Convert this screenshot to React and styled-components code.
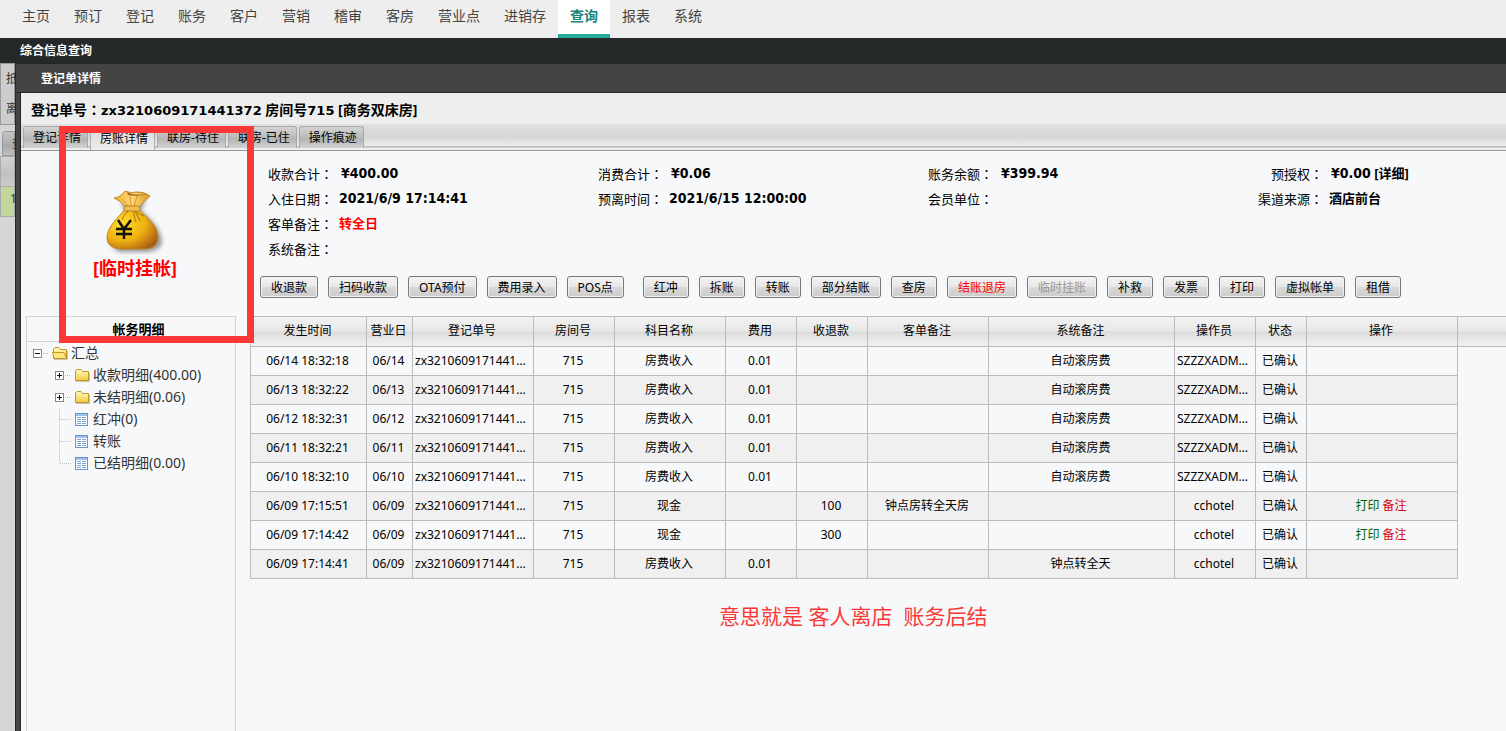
import React from 'react'
import styled, { createGlobalStyle, css } from 'styled-components'

const GlobalStyle = createGlobalStyle`
  * {
    box-sizing: border-box;
  }

  body {
    margin: 0;
    background: #d5d6d7;
    color: #000;
    font-family: 'Noto Sans', 'Noto Sans CJK SC', sans-serif;
    font-size: 12px;
  }
`

const Page = styled.div`
  display: flex;
  flex-direction: column;
  min-height: 100vh;
  overflow: hidden;
`

const Nav = styled.nav`
  display: flex;
  height: 38px;
  padding-left: 10px;
  background: #eee;
`

const NavLink = styled.a`
  padding: 0 12px;
  color: #444;
  font-size: 14px;
  line-height: 32px;
  text-decoration: none;

  ${props => props.$active && css`
    background: #fff;
    border-bottom: 4px solid #23ab9b;
    color: #16857c;
    font-weight: bold;
  `}
`

const PageTitle = styled.header`
  height: 25px;
  padding-left: 20px;
  background: #25292a;
  color: #fff;
  font-size: 12px;
  font-weight: bold;
  line-height: 26px;
`

const Workspace = styled.div`
  display: flex;
  flex-grow: 1;
`

/* The sliver of the search page that stays visible left of the dialog. */
const Behind = styled.div`
  width: 15px;
  flex-shrink: 0;
  overflow: hidden;
  color: #333;
  white-space: nowrap;
`

const BehindFilter = styled.div`
  height: 62px;
  padding-left: 5px;
  border: 1px solid #999;
  background: #ccc;
  line-height: 30px;
`

const BehindTab = styled.div`
  height: 25px;
  margin: 6px 0 0 2px;
  padding-left: 9px;
  border: 1px solid #999;
  border-radius: 3px 0 0 0;
  background: linear-gradient(#c4c4c4, #aaa 60%, #c0c0c0);
  line-height: 24px;
`

const BehindHead = styled.div`
  height: 31px;
  border: 1px solid #aaa;
  background: linear-gradient(#d3d3d3, #c0c0c0 60%, #ccc);
`

const BehindRow = styled.div`
  height: 30px;
  padding-left: 9px;
  border: 1px solid #aaa;
  border-top: 0;
  background: #c3d69b;
  line-height: 24px;
`

const Dialog = styled.section`
  display: flex;
  flex-direction: column;
  flex-grow: 1;
  min-width: 0;
  border-left: 1px solid #222627;
  background: #444;
`

const DialogTitle = styled.header`
  height: 30px;
  padding-left: 25px;
  border-top: 1px solid #222627;
  border-bottom: 1px solid #222627;
  color: #fff;
  font-weight: bold;
  line-height: 30px;
`

const DialogBody = styled.div`
  position: relative;
  flex-grow: 1;
  margin-left: 4px;
  border-left: 1px solid #222627;
  background: #f6f8fa;
`

const OrderHeading = styled.h1`
  height: 31px;
  margin: 0;
  padding-left: 10px;
  background: #eee;
  font-size: 14px;
  line-height: 32px;
  white-space: pre;
`

const OrderNumber = styled.span`
  font-family: 'DejaVu Sans', sans-serif;
  font-size: 13px;
`

/* The TC face sets the full-width colon in the middle of its box. */
const Colon = styled.span`
  font-family: 'Noto Sans CJK TC', sans-serif;
`

const TabBar = styled.div`
  display: flex;
  gap: 2px;
  height: 27px;
  padding: 2px 0 0 2px;
  border-bottom: 1px solid #999;
  background: linear-gradient(#e0e0e0, #d6d6d6 50%, #eee 85%, #bbb 86%, #bbb 90%, #eee 91%);
`

const Tab = styled.button`
  height: ${props => (props.$active ? 24 : 22)}px;
  padding: 0 6px 0 9px;
  border: 1px solid #aaa;
  border-bottom: 0;
  border-radius: 3px 3px 0 0;
  background: ${props => (props.$active ? 'linear-gradient(#d8d8d8, #eee)' : 'linear-gradient(#d4d4d4, #b5b5b5 60%, #d4d4d4)')};
  color: #000;
  font: inherit;
  line-height: 22px;
  white-space: nowrap;
`

const Columns = styled.div`
  display: flex;
`

const Side = styled.aside`
  width: 229px;
  flex-shrink: 0;
  padding-left: 5px;
`

const Status = styled.div`
  display: flex;
  flex-direction: column;
  align-items: center;
  height: 165px;
  padding: 38px 6px 0 0;
`

const StatusText = styled.strong`
  color: #f00;
  font-size: 18px;
  line-height: 26px;
`

const TreePanel = styled.div`
  width: 210px;
  height: calc(100vh - 316px);
  border: 1px solid #d3d3d3;
  border-bottom: 0;
`

const TreeTitle = styled.h2`
  height: 25px;
  margin: 0;
  padding-left: 15px;
  border-bottom: 1px solid #d3d3d3;
  background: #f8f8f8;
  font-size: 13px;
  line-height: 24px;
  text-align: center;
`

const TreeRow = styled.div`
  display: flex;
  align-items: center;
  height: 22px;
  padding-left: ${props => (props.$root ? 5 : 27)}px;
  color: #333;
  font-size: 14px;
  line-height: 22px;
  white-space: nowrap;

  svg {
    flex-shrink: 0;
    margin-right: 3px;
  }

  svg:first-child {
    margin-right: 0;
  }
`

const Main = styled.main`
  flex-grow: 1;
  min-width: 0;
`

const Summary = styled.dl`
  display: grid;
  grid-template-columns: 330px 330px 330px 1fr;
  grid-auto-rows: 25px;
  height: 125px;
  margin: 0;
  padding: 10px 0 0 12px;
`

const SummaryItem = styled.div`
  display: flex;
  grid-column: ${props => props.$column};
  font-size: 13px;
  line-height: 25px;
  white-space: pre;
`

const Term = styled.dt`
  width: 77px;
  padding-right: 6px;
  text-align: right;
  white-space: nowrap;
`

const Detail = styled.dd`
  margin: 0 0 0 ${props => (props.$money ? 2 : 0)}px;
  color: ${props => (props.$red ? '#f00' : '#000')};
  font-weight: bold;
`

const Figure = styled.span`
  font-family: 'DejaVu Sans Condensed', 'DejaVu Sans', sans-serif;
  font-size: 14px;
`

const Actions = styled.div`
  display: flex;
  gap: 10px;
  height: 40px;
  padding-left: 10px;
`

const ActionButton = styled.button`
  height: 22px;
  margin-right: ${props => (props.$last ? 9 : 0)}px;
  padding: 0 10px;
  border: 1px solid #777;
  border-radius: 3px;
  background: linear-gradient(#f4f4f4, #e8e8e8 48%, #d8d8d8 52%, #ccc);
  box-shadow: inset 0 0 0 1px #f2f2f2;
  color: ${props => (props.$red ? '#f00' : '#000')};
  font: inherit;
  line-height: 22px;
  white-space: nowrap;

  &:disabled {
    color: #999;
  }
`

const TableFrame = styled.div`
  border-top: 1px solid #bbb;
  background: linear-gradient(#f2f2f2, #e8e8e8 48%, #dcdcdc 52%, #f2f2f2) 0 0 / 100% 29px no-repeat;
`

const HeadRule = styled.div`
  height: 30px;
  margin-bottom: -30px;
  border-bottom: 1px solid #bbb;
`

const Table = styled.table`
  width: 1208px;
  border-collapse: collapse;
  table-layout: fixed;
`

const Cell = styled.td`
  height: 29px;
  padding: 0 4px 0 2px;
  overflow: hidden;
  border: 1px solid #bbb;
  border-top: 0;
  font-weight: normal;
  line-height: 28px;
  text-align: center;
  text-overflow: ellipsis;
  white-space: nowrap;
`

const HeadCell = styled(Cell)`
  line-height: 26px;
`

const Row = styled.tr`
  background: #f6f8fa;

  &:nth-child(even) {
    background: #f0f0f0;
  }
`

const RowLink = styled.a`
  color: ${props => props.$color};
  text-decoration: none;
`

const Remark = styled.p`
  margin: 22px 0 0 469px;
  color: #fb3838;
  font-size: 21px;
  line-height: 30px;
  white-space: pre;
`

const Highlight = styled.div`
  position: absolute;
  top: 33px;
  left: 38px;
  width: 195px;
  height: 217px;
  border: 7px solid #fb3838;
  pointer-events: none;
`

function MoneyBag () {
    return (
        <svg width="62" height="66" viewBox="0 0 62 66" aria-hidden="true">
            <defs>
                <radialGradient id="bag" cx="0.3" cy="0.35" r="0.8">
                    <stop offset="0" stopColor="#ffdc2a" />
                    <stop offset="0.55" stopColor="#f0b211" />
                    <stop offset="1" stopColor="#a85a14" />
                </radialGradient>
                <linearGradient id="neck">
                    <stop offset="0" stopColor="#edb52c" />
                    <stop offset="0.5" stopColor="#ffd77a" />
                    <stop offset="1" stopColor="#d99c22" />
                </linearGradient>
                <filter id="soft" x="-20%" y="-20%" width="140%" height="140%">
                    <feGaussianBlur stdDeviation="2" />
                </filter>
            </defs>
            <path d="M15 8 L43 6 L37 22 C48 30 58 42 58 53 Q56 64 36 63 L15 63 Q6 58 7 49 L21 22Z" fill="#555" opacity="0.6" filter="url(#soft)" />
            <path d="M22 20 C14 28 3 38 3 49 Q3 59 17 60 H42 Q54 59 54 48 C54 36 41 27 34 20Z" fill="url(#bag)" stroke="#b98322" />
            <path d="M21 17 Q16 11 10 9 Q16 9 21 2 Q27 5 32 3 Q39 2 46 7 Q41 11 35 18Z" fill="url(#neck)" stroke="#c1872a" />
            <path d="M23 3 Q29 7 44 5 Q36 8 24 6Z" fill="#9b6a17" />
            <path d="M26 6 L27 17 M33 7 L30 17 M18 10 L24 17" fill="none" stroke="#d2962a" />
            <rect x="20" y="17" width="16" height="5" rx="2" fill="#f2bf57" stroke="#ba7f24" />
            <path d="M31 22 Q36 26 40 27 M31 22 L36 32 M29 23 L32 33 M24 22 Q19 27 18 31" fill="none" stroke="#ad701b" />
            <path d="M14 31 L20 40 L27 31 M20 39 V50 M12 40 H28 M12 45 H28" fill="none" stroke="#15120b" strokeWidth="2.5" />
        </svg>
    )
}

function Branch ({ kind, last }) {
    return (
        <svg width="20" height="22" viewBox="0 0 20 22" aria-hidden="true">
            {kind === 'leaf'
                ? <path d={last ? 'M5.5 0 V11.5 H17' : 'M5.5 0 V22 M5.5 11.5 H17'} fill="none" stroke="#bbb" strokeDasharray="1 1" />
                : <>
                    <path d="M11 11.5 H17" stroke="#bbb" strokeDasharray="1 1" />
                    <rect x="1.5" y="7.5" width="8" height="8" fill="#fff" stroke="#888" />
                    <path d={kind === 'open' ? 'M3 11.5 H8' : 'M3 11.5 H8 M5.5 9 V14'} stroke="#111" />
                </>}
        </svg>
    )
}

function Folder ({ open }) {
    return (
        <svg width="16" height="16" viewBox="0 0 16 16" aria-hidden="true">
            <defs>
                <linearGradient id="folder" x2="0" y2="1">
                    <stop offset="0" stopColor="#fffbc4" />
                    <stop offset="1" stopColor="#f5c843" />
                </linearGradient>
            </defs>
            <path d="M2 14.5 H15.5 V6" fill="none" stroke="#c9c4b4" />
            <path d="M1.5 13.5 V4 L3 2.5 H7 L8.5 4.5 H14.5 V13.5Z" fill="url(#folder)" stroke="#c39622" />
            {open && <path d="M2 13.5 L0.5 7.5 H12 L14.5 13.5Z" fill="#ffe680" stroke="#c39622" />}
        </svg>
    )
}

function Sheet () {
    return (
        <svg width="16" height="16" viewBox="0 0 16 16" aria-hidden="true">
            <rect x="1.5" y="2.5" width="12" height="12" fill="#fff" stroke="#6794cd" />
            <path d="M2 4 H13" stroke="#9fc0e8" strokeWidth="2" />
            <path d="M3 6.5 H7 M3 8.5 H7 M3 10.5 H7 M3 12.5 H7 M8 6.5 H12 M8 8.5 H12 M8 10.5 H12 M8 12.5 H12" stroke="#7aa1d3" />
        </svg>
    )
}

const menu = ['主页', '预订', '登记', '账务', '客户', '营销', '稽审', '客房', '营业点', '进销存', '查询', '报表', '系统']
const tabs = ['登记详情', '房账详情', '联房-待住', '联房-已住', '操作痕迹']

const summary = [
    { column: 1, term: '收款合计', figure: '¥400.00', money: true },
    { column: 2, term: '消费合计', figure: '¥0.06', money: true },
    { column: 3, term: '账务余额', figure: '¥399.94', money: true },
    { column: 4, term: '预授权', figure: '¥0.00', text: ' [详细]', money: true },
    { column: 1, term: '入住日期', figure: '2021/6/9 17:14:41' },
    { column: 2, term: '预离时间', figure: '2021/6/15 12:00:00' },
    { column: 3, term: '会员单位' },
    { column: 4, term: '渠道来源', text: '酒店前台' },
    { column: 1, term: '客单备注', text: '转全日', red: true },
    { column: 1, term: '系统备注' }
]

const actions = ['收退款', '扫码收款', 'OTA预付', '费用录入', 'POS点', '红冲', '拆账', '转账', '部分结账', '查房', '结账退房', '临时挂账', '补救', '发票', '打印', '虚拟帐单', '租借']

const tree = [
    { kind: 'closed', label: '收款明细(400.00)' },
    { kind: 'closed', label: '未结明细(0.06)' },
    { kind: 'leaf', label: '红冲(0)' },
    { kind: 'leaf', label: '转账' },
    { kind: 'leaf', label: '已结明细(0.00)', last: true }
]

const columns = [
    ['发生时间', 116],
    ['营业日', 46],
    ['登记单号', 121],
    ['房间号', 81],
    ['科目名称', 111],
    ['费用', 71],
    ['收退款', 71],
    ['客单备注', 121],
    ['系统备注', 186],
    ['操作员', 81],
    ['状态', 51],
    ['操作', 151]
]

const ORDER = 'zx3210609171441372'
const ADMIN = 'SZZZXADMIN01'

// time, subject, fee, payment, guest remark, system remark, operator
const entries = [
    ['06/14 18:32:18', '房费收入', '0.01', '', '', '自动滚房费', ADMIN],
    ['06/13 18:32:22', '房费收入', '0.01', '', '', '自动滚房费', ADMIN],
    ['06/12 18:32:31', '房费收入', '0.01', '', '', '自动滚房费', ADMIN],
    ['06/11 18:32:21', '房费收入', '0.01', '', '', '自动滚房费', ADMIN],
    ['06/10 18:32:10', '房费收入', '0.01', '', '', '自动滚房费', ADMIN],
    ['06/09 17:15:51', '现金', '', '100', '钟点房转全天房', '', 'cchotel'],
    ['06/09 17:14:42', '现金', '', '300', '', '', 'cchotel'],
    ['06/09 17:14:41', '房费收入', '0.01', '', '', '钟点转全天', 'cchotel']
]

function Ledger () {
    return (
        <TableFrame>
            <HeadRule />
            <Table>
                <colgroup>
                    {columns.map(([name, width]) => <col key={name} width={width} />)}
                </colgroup>
                <thead>
                    <tr>
                        {columns.map(([name]) => <HeadCell as="th" key={name}>{name}</HeadCell>)}
                    </tr>
                </thead>
                <tbody>
                    {entries.map(([time, subject, fee, paid, guestNote, systemNote, operator]) => (
                        <Row key={time}>
                            <Cell>{time}</Cell>
                            <Cell>{time.slice(0, 5)}</Cell>
                            <Cell>{ORDER}</Cell>
                            <Cell>715</Cell>
                            <Cell>{subject}</Cell>
                            <Cell>{fee}</Cell>
                            <Cell>{paid}</Cell>
                            <Cell>{guestNote}</Cell>
                            <Cell>{systemNote}</Cell>
                            <Cell>{operator}</Cell>
                            <Cell>已确认</Cell>
                            <Cell>
                                {paid && <>
                                    <RowLink href="#print" $color="#006400">打印</RowLink>
                                    {' '}
                                    <RowLink href="#remark" $color="#d9000f">备注</RowLink>
                                </>}
                            </Cell>
                        </Row>
                    ))}
                </tbody>
            </Table>
        </TableFrame>
    )
}

function App () {
    return (
        <Page>
            <GlobalStyle />
            <Nav>
                {menu.map(name => (
                    <NavLink key={name} href="#menu" $active={name === '查询'}>{name}</NavLink>
                ))}
            </Nav>
            <PageTitle>综合信息查询</PageTitle>
            <Workspace>
                <Behind>
                    <BehindFilter>
                        <div>抵</div>
                        <div>离</div>
                    </BehindFilter>
                    <BehindTab>查</BehindTab>
                    <BehindHead />
                    <BehindRow>1</BehindRow>
                </Behind>
                <Dialog>
                    <DialogTitle>登记单详情</DialogTitle>
                    <DialogBody>
                        <OrderHeading>
                            登记单号<Colon>：</Colon><OrderNumber>{ORDER}</OrderNumber> 房间号<OrderNumber>715</OrderNumber> [商务双床房]
                        </OrderHeading>
                        <TabBar>
                            {tabs.map((name, i) => <Tab key={name} $active={i === 1}>{name}</Tab>)}
                        </TabBar>
                        <Columns>
                            <Side>
                                <Status>
                                    <MoneyBag />
                                    <StatusText>[临时挂帐]</StatusText>
                                </Status>
                                <TreePanel>
                                    <TreeTitle>帐务明细</TreeTitle>
                                    <TreeRow $root>
                                        <Branch kind="open" />
                                        <Folder open />
                                        汇总
                                    </TreeRow>
                                    {tree.map(node => (
                                        <TreeRow key={node.label}>
                                            <Branch kind={node.kind} last={node.last} />
                                            {node.kind === 'leaf' ? <Sheet /> : <Folder />}
                                            {node.label}
                                        </TreeRow>
                                    ))}
                                </TreePanel>
                            </Side>
                            <Main>
                                <Summary>
                                    {summary.map(item => (
                                        <SummaryItem key={item.term} $column={item.column}>
                                            <Term>{item.term}<Colon>：</Colon></Term>
                                            <Detail $money={item.money} $red={item.red}>
                                                {item.figure && <Figure>{item.figure}</Figure>}
                                                {item.text}
                                            </Detail>
                                        </SummaryItem>
                                    ))}
                                </Summary>
                                <Actions>
                                    {actions.map(name => (
                                        <ActionButton
                                            key={name}
                                            $last={name === 'POS点'}
                                            $red={name === '结账退房'}
                                            disabled={name === '临时挂账'}>
                                            {name}
                                        </ActionButton>
                                    ))}
                                </Actions>
                                <Ledger />
                                <Remark>意思就是 客人离店  账务后结</Remark>
                            </Main>
                        </Columns>
                        <Highlight />
                    </DialogBody>
                </Dialog>
            </Workspace>
        </Page>
    )
}

export default App
